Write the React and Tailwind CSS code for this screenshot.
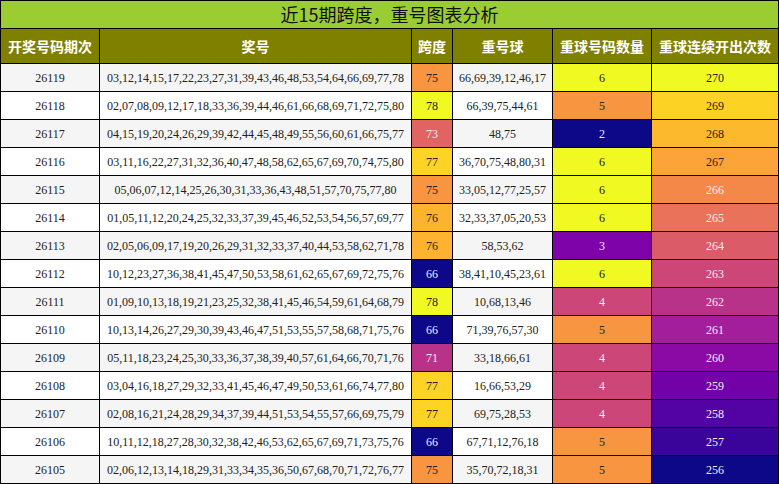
const rows = [
["26119","03,12,14,15,17,22,23,27,31,39,43,46,48,53,54,64,66,69,77,78","75","66,69,39,12,46,17","6","270"],
["26118","02,07,08,09,12,17,18,33,36,39,44,46,61,66,68,69,71,72,75,80","78","66,39,75,44,61","5","269"],
["26117","04,15,19,20,24,26,29,39,42,44,45,48,49,55,56,60,61,66,75,77","73","48,75","2","268"],
["26116","03,11,16,22,27,31,32,36,40,47,48,58,62,65,67,69,70,74,75,80","77","36,70,75,48,80,31","6","267"],
["26115","05,06,07,12,14,25,26,30,31,33,36,43,48,51,57,70,75,77,80","75","33,05,12,77,25,57","6","266"],
["26114","01,05,11,12,20,24,25,32,33,37,39,45,46,52,53,54,56,57,69,77","76","32,33,37,05,20,53","6","265"],
["26113","02,05,06,09,17,19,20,26,29,31,32,33,37,40,44,53,58,62,71,78","76","58,53,62","3","264"],
["26112","10,12,23,27,36,38,41,45,47,50,53,58,61,62,65,67,69,72,75,76","66","38,41,10,45,23,61","6","263"],
["26111","01,09,10,13,18,19,21,23,25,32,38,41,45,46,54,59,61,64,68,79","78","10,68,13,46","4","262"],
["26110","10,13,14,26,27,29,30,39,43,46,47,51,53,55,57,58,68,71,75,76","66","71,39,76,57,30","5","261"],
["26109","05,11,18,23,24,25,30,33,36,37,38,39,40,57,61,64,66,70,71,76","71","33,18,66,61","4","260"],
["26108","03,04,16,18,27,29,32,33,41,45,46,47,49,50,53,61,66,74,77,80","77","16,66,53,29","4","259"],
["26107","02,08,16,21,24,28,29,34,37,39,44,51,53,54,55,57,66,69,75,79","77","69,75,28,53","4","258"],
["26106","10,11,12,18,27,28,30,32,38,42,46,53,62,65,67,69,71,73,75,76","66","67,71,12,76,18","5","257"],
["26105","02,06,12,13,14,18,29,31,33,34,35,36,50,67,68,70,71,72,76,77","75","35,70,72,18,31","5","256"],
];
const span = {"75":["bg-[#f89540]",0],"78":["bg-[#f0f921]",0],"73":["bg-[#e16462]",1],"77":["bg-[#fdd424]",0],"76":["bg-[#fdb32f]",0],"66":["bg-[#0d0887]",1],"71":["bg-[#b83289]",1]};
const cnt = {"6":["bg-[#f0f921]",0],"5":["bg-[#f89540]",0],"2":["bg-[#0d0887]",1],"3":["bg-[#7e03a8]",1],"4":["bg-[#cc4778]",1]};
const last = [["bg-[#f0f921]",0],["bg-[#fcd225]",0],["bg-[#fdb92e]",0],["bg-[#fca33a]",0],["bg-[#f48849]",1],["bg-[#e8735a]",1],["bg-[#db5c68]",1],["bg-[#cc4778]",1],["bg-[#b83289]",1],["bg-[#a31e9a]",1],["bg-[#8b0aa5]",1],["bg-[#7201a8]",1],["bg-[#5302a3]",1],["bg-[#3a049a]",1],["bg-[#0d0887]",1]];
const td = "border border-black text-center h-[28px] p-0";
export default function App(){
  return (
    <div className="w-[779px] h-[484px] overflow-hidden bg-white" style={{fontFamily:'"Liberation Serif","Noto Sans CJK SC",serif'}}>
      <table className="border-collapse w-[779px] table-fixed text-[12px] text-[#222]">
        <colgroup>
          <col className="w-[99px]"/><col className="w-[312px]"/><col className="w-[41px]"/><col className="w-[100px]"/><col className="w-[99px]"/><col/>
        </colgroup>
        <thead>
          <tr><th colSpan={6} className="border border-black bg-[#9acd32] h-[28px] p-0 text-[18px] font-normal text-[#111]" style={{fontFamily:'"Noto Sans CJK SC",sans-serif'}}>近15期跨度，重号图表分析</th></tr>
          <tr className="bg-[#808000] text-white text-[14px] font-bold" style={{fontFamily:'"Noto Sans CJK SC",sans-serif'}}>
            {["开奖号码期次","奖号","跨度","重号球","重球号码数量","重球连续开出次数"].map(h=><th key={h} className="border border-black h-[35px] p-0 font-bold">{h}</th>)}
          </tr>
        </thead>
        <tbody>
          {rows.map((r,i)=>{
            const bg = i%2===0?"bg-[#f5f5f5]":"bg-white";
            const s=span[r[2]], c=cnt[r[4]], l=last[i];
            return <tr key={r[0]} className={bg}>
              <td className={td}>{r[0]}</td>
              <td className={td+" whitespace-nowrap"}>{r[1]}</td>
              <td className={td+" "+s[0]+(s[1]?" text-[#eee]":"")}>{r[2]}</td>
              <td className={td}>{r[3]}</td>
              <td className={td+" "+c[0]+(c[1]?" text-[#eee]":"")}>{r[4]}</td>
              <td className={td+" "+l[0]+(l[1]?" text-[#eee]":"")}>{r[5]}</td>
            </tr>;
          })}
        </tbody>
      </table>
    </div>
  );
}
